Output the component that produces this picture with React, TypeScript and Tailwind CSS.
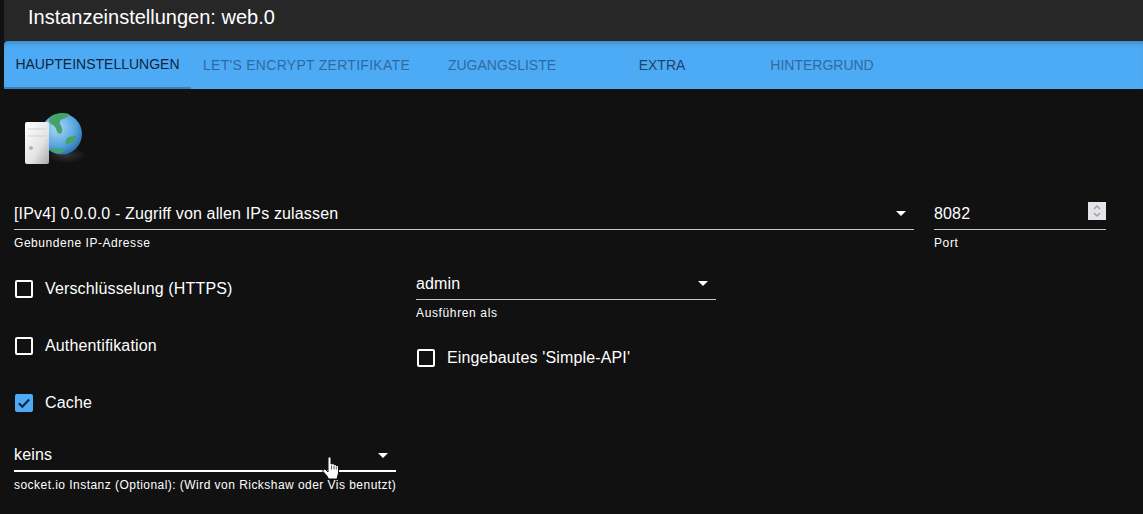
const tabs = [
  { label: 'HAUPTEINSTELLUNGEN', width: 'w-[187px]', color: 'text-[#10253a]', spacing: 'tracking-[0px]' },
  { label: "LET'S ENCRYPT ZERTIFIKATE", width: 'w-[231px]', color: 'text-[#2f6a9f]', spacing: 'tracking-[0.28px]' },
  { label: 'ZUGANGSLISTE', width: 'w-[160px]', color: 'text-[#2f6a9f]', spacing: 'tracking-[0px]' },
  { label: 'EXTRA', width: 'w-[160px]', color: 'text-[#1c4468]', spacing: 'tracking-[0px]' },
  { label: 'HINTERGRUND', width: 'w-[160px]', color: 'text-[#2f6a9f]', spacing: 'tracking-[0px]' },
]

function Caret() {
  return (
    <svg className="w-[10px] h-[5px] shrink-0" viewBox="0 0 10 5">
      <path d="M0 0h10L5 5z" fill="#fff" />
    </svg>
  )
}

function SelectField({ value, label, active = false, spacing = 'tracking-[0.46px]' }: { value: string; label: string; active?: boolean; spacing?: string }) {
  return (
    <div>
      <div className={`flex items-center justify-between h-[32px] pr-[8px] ${active ? 'border-b-2 border-white' : 'border-b border-[#c8c8c8]'}`}>
        <span className="text-[16px] leading-[28px] tracking-[0.15px] text-white">{value}</span>
        <Caret />
      </div>
      <div className={`mt-[6px] text-[12px] leading-[14px] whitespace-nowrap text-white ${spacing}`}>{label}</div>
    </div>
  )
}

function Check({ label, checked = false }: { label: string; checked?: boolean }) {
  return (
    <div className="flex items-center h-[20px]">
      {checked ? (
        <svg className="w-[18px] h-[18px] ml-[1px] shrink-0" viewBox="0 0 18 18">
          <rect width="18" height="18" rx="2" fill="#4dabf5" />
          <path d="M3.800 9.200l3.500 3.500L14.200 5.600" fill="none" stroke="#10253a" strokeWidth="2.200" />
        </svg>
      ) : (
        <div className="w-[18px] h-[18px] ml-[1px] shrink-0 rounded-[2px] border-2 border-white" />
      )}
      <span className="ml-[12px] text-[16px] leading-[20px] tracking-[0.15px] text-white">{label}</span>
    </div>
  )
}

function ServerGlobe() {
  return (
    <svg className="w-[70px] h-[64px]" viewBox="0 0 70 64">
      <defs>
        <radialGradient id="sea" cx="0.4" cy="0.35" r="0.75">
          <stop offset="0" stopColor="#a8d8f5" />
          <stop offset="0.6" stopColor="#55a5e0" />
          <stop offset="1" stopColor="#1f5f9e" />
        </radialGradient>
        <linearGradient id="case" x1="0" y1="0" x2="1" y2="1">
          <stop offset="0" stopColor="#ffffff" />
          <stop offset="0.6" stopColor="#e4e4e4" />
          <stop offset="1" stopColor="#a9a9a9" />
        </linearGradient>
        <radialGradient id="shade">
          <stop offset="0" stopColor="#343434" />
          <stop offset="1" stopColor="#111111" />
        </radialGradient>
      </defs>
      <ellipse cx="46" cy="50" rx="20" ry="8" fill="url(#shade)" />
      <circle cx="41.500" cy="29" r="20.500" fill="url(#sea)" />
      <path d="M30 12c5-4 13-5 19-3 1 3-5 4-8 6-3 2 0 5 1 8 1 4-1 7-4 5-2-3-2-6-5-8-3-1-5-4-3-8z" fill="#45a268" />
      <path d="M47 33c3-2 6-1 9-3 1 2-1 7-4 8-2 1-4 0-5 2-2 0-2-5 0-7z" fill="#45a268" />
      <path d="M30 45c4-2 9-2 15 1-3 3-10 3-15-1z" fill="#45a268" />
      <rect x="5" y="17" width="24" height="42" rx="2" fill="url(#case)" />
      <path d="M8 24h18M8 31h18" stroke="#d2d2d2" strokeWidth="1" />
      <circle cx="11" cy="43" r="2" fill="#b5b5b5" />
    </svg>
  )
}

function HandCursor() {
  return (
    <svg className="absolute left-[322px] top-[456px] w-[20px] h-[26px]" viewBox="0 0 20 26">
      <path
        d="M6 2 C6 0.500 9 0.500 9 2 L9 8 L12 7.500 L12 8.500 L14 8.500 L14 9.500 L16 9.500 L16.500 11 L16.500 17 L15 23 L6.500 23 L5 20 L1 15.500 L1 13.500 L3 13 L6 16 Z"
        fill="#fff"
        stroke="#111"
        strokeWidth="1"
        strokeLinejoin="round"
      />
      <path d="M9.500 9.500v4M12 9.500v4M14.300 10.500v3" stroke="#333" strokeWidth="0.800" />
    </svg>
  )
}

export default function App() {
  return (
    <div className="relative w-[1143px] h-[514px] overflow-hidden bg-[#111111] font-['Liberation_Sans',Arial,sans-serif]">
      <div className="h-[41px] ml-[4px] pl-[24px] bg-[#272727] text-white text-[20px] leading-[35px]">
        Instanzeinstellungen: web.0
      </div>

      <div className="flex h-[48px] ml-[4px] bg-[#4dabf5] shadow-[inset_0_5px_5px_-3px_rgba(0,0,0,0.22)] rounded-tl-[4px]">
        {tabs.map((tab, index) => (
          <div
            key={tab.label}
            className={`${tab.width} ${tab.spacing} flex items-center justify-center text-[14px] ${tab.color} ${index === 0 ? 'border-b-2 border-[#3f7fb8]' : ''}`}
          >
            {tab.label}
          </div>
        ))}
      </div>

      <div className="pl-[14px]">
        <div className="pl-[6px] pt-[16px] h-[109px]">
          <ServerGlobe />
        </div>

        <div className="flex gap-[20px]">
          <div className="w-[900px]">
            <SelectField value="[IPv4] 0.0.0.0 - Zugriff von allen IPs zulassen" label="Gebundene IP-Adresse" spacing="tracking-[0.55px]" />
          </div>
          <div className="w-[172px]">
            <div className="flex items-center justify-between h-[32px] border-b border-[#c8c8c8]">
              <span className="text-[16px] leading-[28px] tracking-[0.15px] text-white">8082</span>
              <svg className="w-[18px] h-[18px] mb-[5px]" viewBox="0 0 18 18">
                <rect width="18" height="18" fill="#e4e4e8" />
                <path d="M6 7l3-3 3 3M6 11l3 3 3-3" fill="none" stroke="#a0a0a8" strokeWidth="1.500" />
              </svg>
            </div>
            <div className="mt-[6px] text-[12px] leading-[14px] tracking-[0.6px] text-white">Port</div>
          </div>
        </div>

        <div className="flex gap-[20px] mt-[18px]">
          <div className="w-[382px]">
            <div className="flex flex-col gap-[37px] pt-[11px]">
              <Check label="Verschlüsselung (HTTPS)" />
              <Check label="Authentifikation" />
              <Check label="Cache" checked />
            </div>
            <div className="mt-[27px]">
              <SelectField value="keins" label="socket.io Instanz (Optional): (Wird von Rickshaw oder Vis benutzt)" active />
            </div>
          </div>
          <div className="w-[300px]">
            <SelectField value="admin" label="Ausführen als" spacing="tracking-[0.63px]" />
            <div className="mt-[28px]">
              <Check label="Eingebautes 'Simple-API'" />
            </div>
          </div>
        </div>
      </div>

      <HandCursor />
    </div>
  )
}
